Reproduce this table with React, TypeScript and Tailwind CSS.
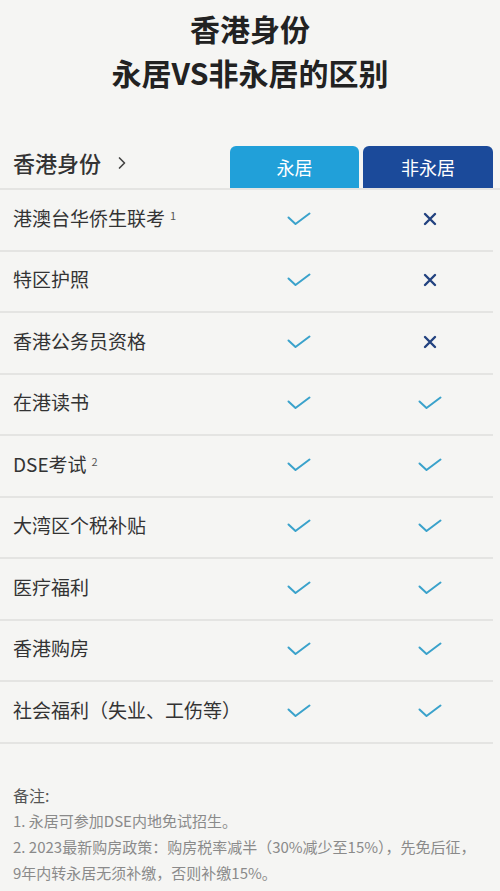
import { ChevronRight } from "lucide-react";

type Row = { label: string; note?: string; perm: boolean; nonPerm: boolean };

const rows: Row[] = [
  { label: "港澳台华侨生联考", note: "1", perm: true, nonPerm: false },
  { label: "特区护照", perm: true, nonPerm: false },
  { label: "香港公务员资格", perm: true, nonPerm: false },
  { label: "在港读书", perm: true, nonPerm: true },
  { label: "DSE考试", note: "2", perm: true, nonPerm: true },
  { label: "大湾区个税补贴", perm: true, nonPerm: true },
  { label: "医疗福利", perm: true, nonPerm: true },
  { label: "香港购房", perm: true, nonPerm: true },
  { label: "社会福利（失业、工伤等）", perm: true, nonPerm: true },
];

function Check() {
  return (
    <svg width="24" height="14" viewBox="0 0 24 14" fill="none">
      <path d="M1.5 5.5 L8.5 12 L22.5 1.5" stroke="#3aa2cb" strokeWidth="2" strokeLinecap="round" strokeLinejoin="round" />
    </svg>
  );
}

function Cross() {
  return (
    <svg width="14" height="14" viewBox="0 0 14 14" fill="none">
      <path d="M2 2 L12 12 M12 2 L2 12" stroke="#22427f" strokeWidth="2.4" strokeLinecap="round" />
    </svg>
  );
}

export default function App() {
  return (
    <div className="min-h-[891px] w-[500px] bg-[#f5f5f3] font-['Noto_Sans_CJK_SC','Noto_Sans',sans-serif] text-[#333]">
      {/* Title */}
      <div className="pt-[6px] text-center text-[30px] font-bold leading-[44px] text-[#222]">
        <div>香港身份</div>
        <div>永居VS非永居的区别</div>
      </div>

      {/* Table header */}
      <div className="mt-[52px] flex items-end border-b-2 border-[#e4e4e2] pr-[7px]">
        <div className="flex flex-1 items-center gap-[11px] pb-[9px] pl-[13px] text-[22px] font-medium text-[#333]">
          <span>香港身份</span>
          <ChevronRight size={20} strokeWidth={2} className="text-[#444]" />
        </div>
        <div className="flex gap-[4px]">
          <div className="flex h-[42px] w-[129px] items-center justify-center rounded-t-[6px] bg-[#21a0d9] text-[18px] text-white">
            永居
          </div>
          <div className="flex h-[42px] w-[130px] items-center justify-center rounded-t-[6px] bg-[#1b4a9a] text-[18px] text-white">
            非永居
          </div>
        </div>
      </div>

      {/* Rows */}
      <div className="pr-[7px]">
        {rows.map((r) => (
          <div key={r.label} className="flex h-[61.5px] items-center border-b-2 border-[#e4e4e2]">
            <div className="min-w-0 flex-1 whitespace-nowrap pb-[4px] pl-[13px] text-[19px] text-[#333]">
              {r.label}
              {r.note && <sup className="ml-[5px] text-[11px] text-[#555]">{r.note}</sup>}
            </div>
            <div className="flex w-[129px] shrink-0 justify-center pb-[2px] pl-[8px]">{r.perm ? <Check /> : <Cross />}</div>
            <div className="w-[4px] shrink-0" />
            <div className="flex w-[130px] shrink-0 justify-center pb-[2px] pl-[4px]">{r.nonPerm ? <Check /> : <Cross />}</div>
          </div>
        ))}
      </div>

      {/* Notes */}
      <div className="px-[13px] pt-[38px] text-[15px] leading-[26px] text-[#8a8a8a]">
        <div className="text-[16px] text-[#555]">备注:</div>
        <div>1. 永居可参加DSE内地免试招生。</div>
        <div>2. 2023最新购房政策：购房税率减半（30%减少至15%），先免后征，</div>
        <div>9年内转永居无须补缴，否则补缴15%。</div>
      </div>
    </div>
  );
}
